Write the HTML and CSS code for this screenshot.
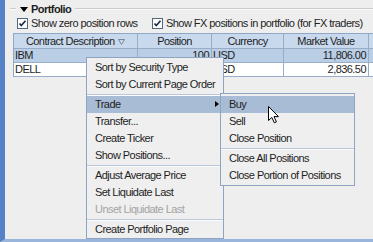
FILE: index.html
```html
<!DOCTYPE html>
<html lang="en">
<head>
    <meta charset="UTF-8">
    <meta name="viewport" content="width=device-width, initial-scale=1.0">
    <title>Portfolio</title>
    <link rel="stylesheet" href="styles.css">
</head>
<body>
    <div class="janela">
        <div class="titulo-secao">
            <span class="linha curta"></span>
            <span class="seta-baixo"></span>
            <span class="titulo">Portfolio</span>
            <span class="linha"></span>
        </div>

        <div class="opcoes">
            <label class="check primeiro">
                <svg class="caixa" width="11" height="11" viewBox="0 0 11 11"><rect x="0.5" y="0.5" width="10" height="10" fill="#fff" stroke="#52667e"/><polyline points="2.5,5.5 4.3,7.6 8.5,2.8" fill="none" stroke="#1b2a44" stroke-width="1.6"/></svg>
                Show zero position rows
            </label>
            <label class="check">
                <svg class="caixa" width="11" height="11" viewBox="0 0 11 11"><rect x="0.5" y="0.5" width="10" height="10" fill="#fff" stroke="#52667e"/><polyline points="2.5,5.5 4.3,7.6 8.5,2.8" fill="none" stroke="#1b2a44" stroke-width="1.6"/></svg>
                Show FX positions in portfolio (for FX traders)
            </label>
        </div>

        <div class="tabela">
            <div class="linha-tabela cabecalho">
                <div class="celula">Contract Description <svg width="7" height="6" viewBox="0 0 7 6"><polygon points="0.5,0.5 6.5,0.5 3.5,5.5" fill="none" stroke="#7c8895"/></svg></div>
                <div class="celula">Position</div>
                <div class="celula">Currency</div>
                <div class="celula">Market Value</div>
                <div class="celula"></div>
            </div>
            <div class="linha-tabela selecionada">
                <div class="celula">IBM</div>
                <div class="celula num">100</div>
                <div class="celula">USD</div>
                <div class="celula num">11,806.00</div>
                <div class="celula"></div>
            </div>
            <div class="linha-tabela">
                <div class="celula">DELL</div>
                <div class="celula num">100</div>
                <div class="celula">USD</div>
                <div class="celula num">2,836.50</div>
                <div class="celula"></div>
            </div>
        </div>

        <!-- menu de contexto -->
        <div class="menu principal">
            <div class="item">Sort by Security Type</div>
            <div class="item">Sort by Current Page Order</div>
            <div class="separador"></div>
            <div class="item ativo">Trade<span class="seta-direita"></span></div>
            <div class="item">Transfer...</div>
            <div class="item">Create Ticker</div>
            <div class="item">Show Positions...</div>
            <div class="separador"></div>
            <div class="item">Adjust Average Price</div>
            <div class="item">Set Liquidate Last</div>
            <div class="item desativado">Unset Liquidate Last</div>
            <div class="separador"></div>
            <div class="item">Create Portfolio Page</div>
        </div>

        <!-- submenu Trade -->
        <div class="menu submenu">
            <div class="item ativo">Buy</div>
            <div class="item">Sell</div>
            <div class="item">Close Position</div>
            <div class="separador"></div>
            <div class="item">Close All Positions</div>
            <div class="item">Close Portion of Positions</div>
        </div>

        <svg class="cursor" width="12" height="18" viewBox="0 0 12 18"><path d="M0.5 0.5 L0.5 14.5 L3.8 11.4 L6.3 16.8 L8.4 15.9 L6 10.6 L10.5 10.6 Z" fill="#fff" stroke="#000" stroke-linejoin="miter"/></svg>
    </div>
</body>
</html>
```

FILE: styles.css
```css
/* css */
body {
    margin: 0;
    background-color: #eeeeee;
    font-family: "Liberation Sans", Arial, sans-serif;
    font-size: 11px;
    letter-spacing: -0.55px;
    color: #1e1e1e;
}
.janela {
    position: relative;
    width: 373px;
    height: 242px;
    box-sizing: border-box;
    padding-top: 2px;
    border-left: 5px solid #5882c7;
    border-bottom: 3px solid #9ab5dc;
    overflow: hidden;
}

/* titulo com borda */
.titulo-secao {
    display: flex;
    align-items: center;
    height: 14px;
}
.linha {
    flex: 1;
    height: 0;
    border-top: 1px solid #cbcbcb;
    border-bottom: 1px solid #fafafa;
    margin-left: 4px;
}
.linha.curta {
    flex: none;
    width: 6px;
    margin-left: 5px;
}
.seta-baixo {
    width: 0;
    height: 0;
    margin-left: 4px;
    border-left: 4px solid transparent;
    border-right: 4px solid transparent;
    border-top: 5px solid #000;
}
.titulo {
    margin-left: 3px;
    font-weight: bold;
}

/* checkboxes */
.opcoes {
    display: flex;
    align-items: center;
    height: 14px;
    padding-left: 12px;
}
.check {
    display: flex;
    align-items: center;
    gap: 3px;
    white-space: nowrap;
}
.check.primeiro {
    width: 135px;
}

/* tabela */
.tabela {
    margin-top: 3px;
    margin-left: 8px;
    border-top: 1px solid #8ea7c6;
    border-left: 1px solid #8ea7c6;
}
.linha-tabela {
    display: grid;
    grid-template-columns: 124px 74px 72px 85px 40px;
    height: 13px;
    border-bottom: 1px solid #97adc8;
    background-color: #fff;
}
.linha-tabela.cabecalho {
    height: 14px;
    background-color: #c8d9ed;
}
.linha-tabela.selecionada {
    background-color: #bacee6;
}
.celula {
    border-right: 1px solid #97adc8;
    line-height: 13px;
    padding: 0 1px;
    white-space: nowrap;
    overflow: hidden;
}
.cabecalho .celula {
    line-height: 14px;
    text-align: center;
}
.cabecalho svg {
    margin-left: 1px;
    vertical-align: 0;
}
.celula.num {
    text-align: right;
    padding-right: 2px;
}

/* menus */
.menu {
    position: absolute;
    box-sizing: border-box;
    background-color: #efefef;
    border: 1px solid #8fa4c3;
    padding-top: 1px;
}
.menu.principal {
    left: 81px;
    top: 57px;
    width: 138px;
}
.menu.submenu {
    left: 215px;
    top: 93px;
    width: 135px;
    padding-top: 2px;
    padding-bottom: 1px;
}
.item {
    position: relative;
    height: 17px;
    line-height: 17px;
    padding-left: 8px;
    white-space: nowrap;
}
.item.ativo {
    background-color: #a8bcd5;
}
.item.desativado {
    color: #a3a3a3;
}
.separador {
    margin-top: 1px;
    border-top: 1px solid #b9c8dc;
    border-bottom: 1px solid #fbfbfb;
}
.seta-direita {
    position: absolute;
    right: 4px;
    top: 5px;
    width: 0;
    height: 0;
    border-top: 3.5px solid transparent;
    border-bottom: 3.5px solid transparent;
    border-left: 4px solid #000;
}
.cursor {
    position: absolute;
    left: 263px;
    top: 106px;
}
```
